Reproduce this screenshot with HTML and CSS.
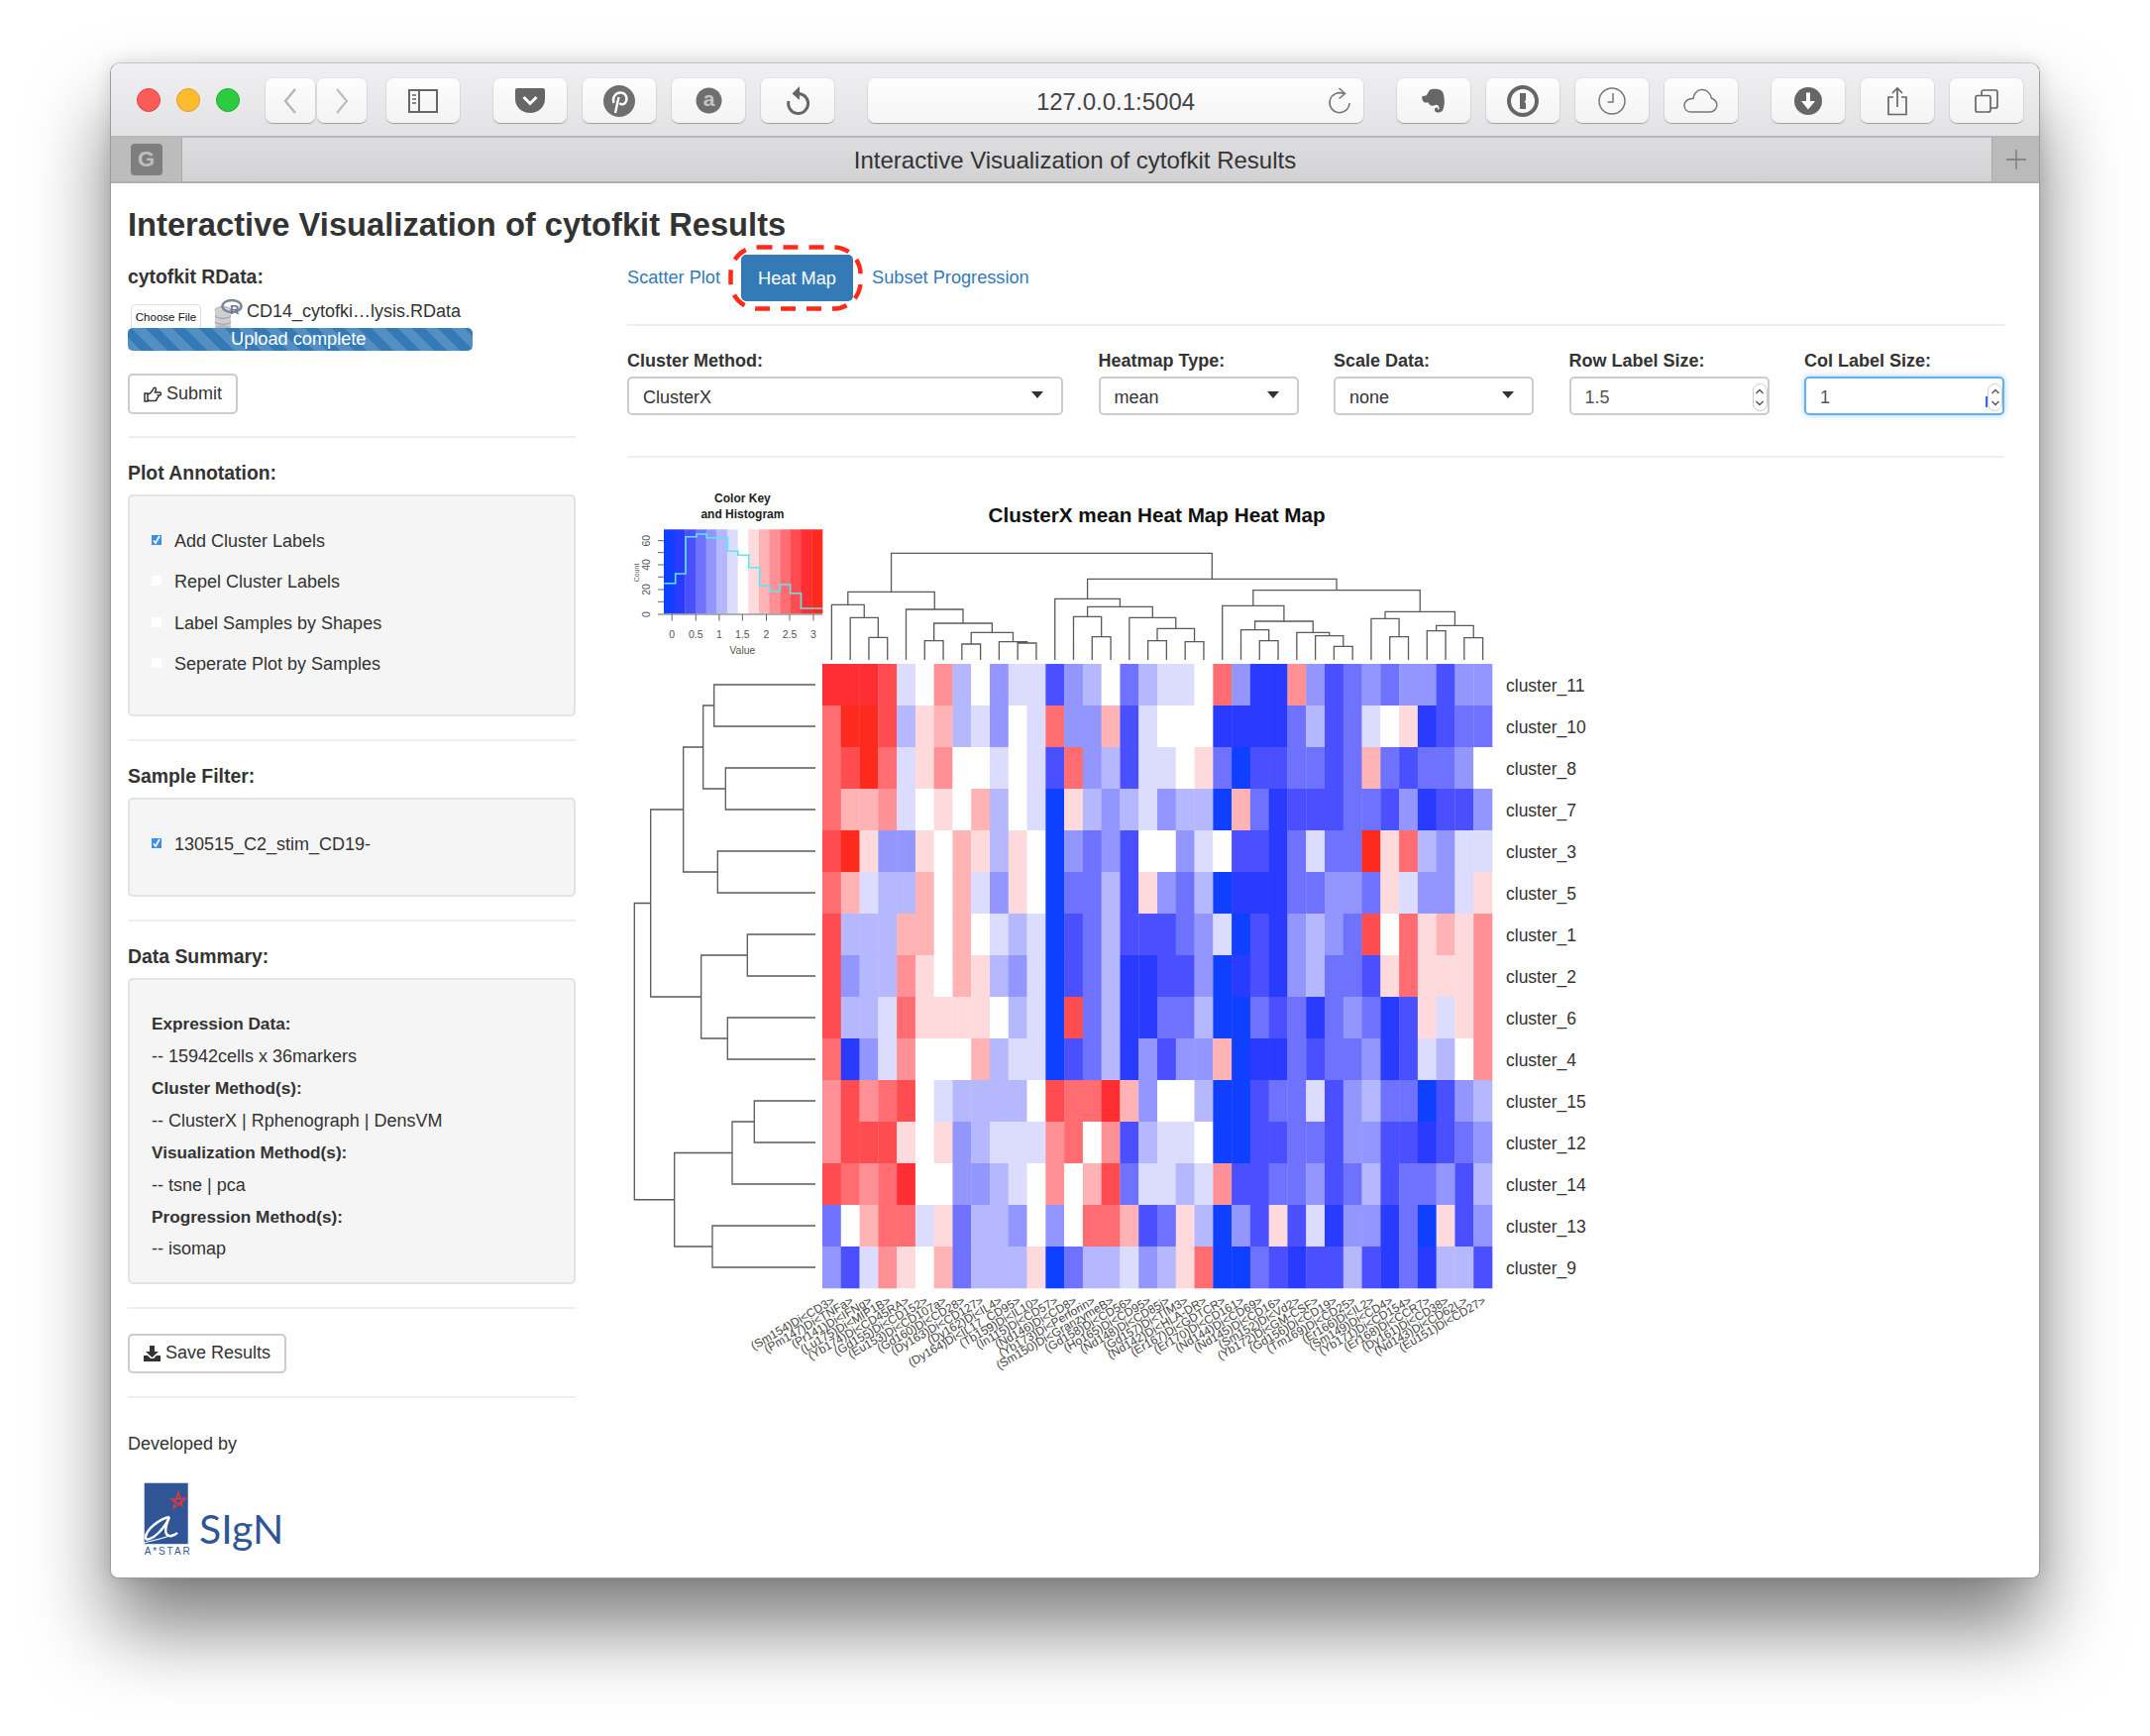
FILE: index.html
```html
<!DOCTYPE html>
<html lang="en">
<head>
    <meta charset="UTF-8">
    <meta name="viewport" content="width=device-width, initial-scale=1.0">
    <title>Interactive Visualization of cytofkit Results</title>
    <link rel="stylesheet" href="styles.css">
</head>
<body>
<div class="window">
    <div class="toolbar">
        <div class="lights">
            <span class="light light-red"></span>
            <span class="light light-yellow"></span>
            <span class="light light-green"></span>
        </div>
        <div class="tb-group tb-pair">
            <div class="tb-btn tb-nav"><svg width="14" height="26" viewBox="0 0 14 26"><path d="M12 1 2 13l10 12" fill="none" stroke="#b4b4b4" stroke-width="2.2"/></svg></div>
            <div class="tb-btn tb-nav"><svg width="14" height="26" viewBox="0 0 14 26"><path d="M2 1l10 12L2 25" fill="none" stroke="#bdbdbd" stroke-width="2.2"/></svg></div>
        </div>
        <div class="tb-btn tb-sidebar"><svg width="30" height="24" viewBox="0 0 30 24"><rect x="1" y="1" width="28" height="22" fill="none" stroke="#666" stroke-width="2"/><path d="M11 1v22" stroke="#666" stroke-width="2"/><path d="M4 6h4M4 10h4M4 14h4" stroke="#888" stroke-width="2"/></svg></div>
        <div class="tb-group">
            <div class="tb-btn"><svg width="30" height="25" viewBox="0 0 30 25"><path d="M2 0h26a2 2 0 0 1 2 2v9a15 14 0 0 1-30 0V2a2 2 0 0 1 2-2z" fill="#666"/><path d="M8.5 9l6.500 6.500L21.500 9" fill="none" stroke="#fff" stroke-width="3"/></svg></div>
            <div class="tb-btn"><svg width="32" height="32" viewBox="0 0 32 32"><circle cx="16" cy="16" r="16" fill="#6f6f6f"/><path d="M10.500 18C8.500 13 12 7.500 17 7.500c5 0 7.500 4 6 8.500-1.300 3.800-5 4.300-6.500 2M15.500 12 12 28" fill="none" stroke="#fff" stroke-width="2.400"/></svg></div>
            <div class="tb-btn"><svg width="27" height="27" viewBox="0 0 27 27"><circle cx="13.500" cy="13.500" r="13" fill="#6f6f6f"/><text x="13.500" y="19" class="icon-a">a</text></svg></div>
            <div class="tb-btn"><svg width="24" height="29" viewBox="0 0 24 29"><path d="M12.500 7.500A10 10 0 1 1 3 15" fill="none" stroke="#666" stroke-width="3"/><path d="M14 0 6.500 7.500 14 14z" fill="#666"/></svg></div>
        </div>
        <div class="address">
            <span class="address-text">127.0.0.1:5004</span>
            <svg class="address-reload" width="24" height="28" viewBox="0 0 24 28"><path d="M16 6.500A10 10 0 1 0 22 16" fill="none" stroke="#777" stroke-width="1.600"/><path d="M11.500 1l6 5.500-6 5" fill="none" stroke="#777" stroke-width="1.600"/></svg>
        </div>
        <div class="tb-group">
            <div class="tb-btn"><svg width="26" height="26" viewBox="0 0 24 25"><path d="M5 7l3-5c3-2 11-2 13 2 2 6 2 12 0 17-1 3-5 3-7 2-2-1-1-5 2-4v2c2 0 2-4-1-5-2 0-3 1-4 1-2 0-4-1-4-3H3C1 12 0 10 1 8z" fill="#666"/></svg></div>
            <div class="tb-btn"><svg width="32" height="32" viewBox="0 0 32 32"><circle cx="16" cy="16" r="14" fill="none" stroke="#666" stroke-width="4"/><path d="M13 8h6v7l-1.500 1.500L19 18v6h-6z" fill="#666"/></svg></div>
            <div class="tb-btn"><svg width="28" height="28" viewBox="0 0 28 28"><circle cx="14" cy="14" r="13" fill="none" stroke="#777" stroke-width="1.500"/><path d="M15 6v9H9.500" fill="none" stroke="#777" stroke-width="1.500"/></svg></div>
            <div class="tb-btn"><svg width="38" height="25" viewBox="0 0 38 25"><path d="M9 24h19a7 7 0 0 0 1.500-13.800C28 4 23.500.800 19 1.500 14.500 2 11.500 6 11 10.500 6.500 10 2 13 2 17.500 2 21.500 5 24 9 24z" fill="none" stroke="#777" stroke-width="1.500"/></svg></div>
        </div>
        <div class="tb-group">
            <div class="tb-btn"><svg width="28" height="28" viewBox="0 0 28 28"><circle cx="14" cy="14" r="14" fill="#666"/><path d="M12 5.500h4V14h5l-7 8.500L7 14h5z" fill="#fff"/></svg></div>
            <div class="tb-btn"><svg width="22" height="30" viewBox="0 0 22 30"><path d="M7 11H2v17.500h18V11h-5" fill="none" stroke="#666" stroke-width="1.700"/><path d="M11 21V2M6 7l5-5 5 5" fill="none" stroke="#666" stroke-width="1.700"/></svg></div>
            <div class="tb-btn"><svg width="24" height="24" viewBox="0 0 24 24"><rect x="1" y="6.500" width="15" height="16.500" rx="2" fill="none" stroke="#666" stroke-width="1.700"/><path d="M7 6.500V3a2 2 0 0 1 2-2h12a2 2 0 0 1 2 2v14a2 2 0 0 1-2 2h-5" fill="none" stroke="#666" stroke-width="1.700"/></svg></div>
        </div>
    </div>

    <div class="tabbar">
        <div class="tab-pin"><span class="favicon">G</span></div>
        <div class="tab-title">Interactive Visualization of cytofkit Results</div>
        <div class="tab-add"><svg width="20" height="20" viewBox="0 0 20 20"><path d="M10 0v20M0 10h20" stroke="#777" stroke-width="1.300"/></svg></div>
    </div>

    <div class="page">
        <h2 class="app-title">Interactive Visualization of cytofkit Results</h2>
        <div class="layout">
            <aside class="sidebar">
                <div class="section-label">cytofkit RData:</div>
                <div class="file-row">
                    <span class="file-btn">Choose File</span>
                    <svg class="file-icon" width="28" height="32" viewBox="0 0 28 32">
                        <ellipse cx="9" cy="11" rx="8" ry="3.500" fill="#d5d5d8" stroke="#aaa"/>
                        <rect x="1" y="11" width="16" height="18" fill="#cfcfd3"/>
                        <path d="M1 17c3 3 13 3 16 0M1 23c3 3 13 3 16 0" fill="none" stroke="#999"/>
                        <ellipse cx="9" cy="29" rx="8" ry="3" fill="#b9b9bd"/>
                        <ellipse cx="18" cy="7" rx="9.500" ry="6" fill="none" stroke="#7b8697" stroke-width="2.500"/>
                        <text x="16" y="15" class="icon-r">R</text>
                    </svg>
                    <span class="file-name">CD14_cytofki…lysis.RData</span>
                </div>
                <div class="progress">Upload complete</div>
                <div class="btn btn-submit">
                    <svg width="18" height="16" viewBox="0 0 18 16"><path d="M1 7h3v8H1zM4 8c2 0 5-3.500 6-6 .8-1.500 2.800-.5 2.300 1.500L11.500 6H16c2 0 2 3 0 3h-1.500c.8 1-.1 2.700-1 2.700 0 1.600-1 2.800-2.300 2.800H7.500C6 14.500 5 14 4 14" fill="none" stroke="#333" stroke-width="1.500"/></svg>
                    Submit
                </div>
                <hr class="rule">
                <div class="section-label">Plot Annotation:</div>
                <div class="well well-checks">
                    <div class="check-row"><span class="check on"><svg width="10" height="10" viewBox="0 0 10 10"><path d="M2 5.500 4 8l4-7" fill="none" stroke="#fff" stroke-width="1.800"/></svg></span>Add Cluster Labels</div>
                    <div class="check-row"><span class="check"></span>Repel Cluster Labels</div>
                    <div class="check-row"><span class="check"></span>Label Samples by Shapes</div>
                    <div class="check-row"><span class="check"></span>Seperate Plot by Samples</div>
                </div>
                <hr class="rule">
                <div class="section-label">Sample Filter:</div>
                <div class="well well-checks">
                    <div class="check-row"><span class="check on"><svg width="10" height="10" viewBox="0 0 10 10"><path d="M2 5.500 4 8l4-7" fill="none" stroke="#fff" stroke-width="1.800"/></svg></span>130515_C2_stim_CD19-</div>
                </div>
                <hr class="rule">
                <div class="section-label">Data Summary:</div>
                <div class="well well-summary">
                    <div class="summary-head">Expression Data:</div>
                    <div>-- 15942cells x 36markers</div>
                    <div class="summary-head">Cluster Method(s):</div>
                    <div>-- ClusterX | Rphenograph | DensVM</div>
                    <div class="summary-head">Visualization Method(s):</div>
                    <div>-- tsne | pca</div>
                    <div class="summary-head">Progression Method(s):</div>
                    <div>-- isomap</div>
                </div>
                <hr class="rule">
                <div class="btn btn-save">
                    <svg width="17" height="16" viewBox="0 0 17 16"><path d="M6 0h5v6h4l-6.500 6L2 6h4zM0 10h4l3 3h3l3-3h4v6H0z" fill="#333"/></svg>
                    Save Results
                </div>
                <hr class="rule">
                <div class="developed">Developed by</div>
                <svg class="logo" width="140" height="76" viewBox="0 0 140 76">
                    <rect x="0.700" y="0.700" width="44" height="61.500" fill="#2f5597"/>
                    <path d="M30 26l5-16 4 14-11-7 15-1z" fill="none" stroke="#e5383b" stroke-width="1.400"/>
                    <path d="M26 35C16 37 3 47 2 55c-1 5 7 2 13-4 5-5 9-11 11-16-4 9-6 18 0 19 4 1 7-2 8-3" fill="none" stroke="#fff" stroke-width="2.400"/>
                    <path d="M0 61c8-2 20-4 34-10" fill="none" stroke="#fff" stroke-width="1.200"/>
                    <text x="0.700" y="73" class="logo-star">A*STAR</text>
                    <text x="56" y="62" class="logo-sign">SIgN</text>
                </svg>
            </aside>

            <main class="main">
                <nav class="tabs">
                    <a class="tab">Scatter Plot</a>
                    <a class="tab tab-active">Heat Map
                        <svg class="tab-ring" width="136" height="67" viewBox="0 0 136 67"><rect x="2.500" y="2.500" width="131" height="62" rx="27" fill="none" stroke="#ff2a1a" stroke-width="4.500" stroke-dasharray="15 11"/></svg>
                    </a>
                    <a class="tab">Subset Progression</a>
                </nav>
                <hr class="rule rule-tabs">
                <div class="controls">
                    <div class="control">
                        <label class="control-label">Cluster Method:</label>
                        <div class="field field-select">ClusterX</div>
                    </div>
                    <div class="control">
                        <label class="control-label">Heatmap Type:</label>
                        <div class="field field-select">mean</div>
                    </div>
                    <div class="control">
                        <label class="control-label">Scale Data:</label>
                        <div class="field field-select">none</div>
                    </div>
                    <div class="control">
                        <label class="control-label">Row Label Size:</label>
                        <div class="field field-number">1.5
                            <span class="spinner"><svg width="10" height="22" viewBox="0 0 10 22"><path d="M1.500 7 5 3.500 8.500 7M1.500 15 5 18.500 8.500 15" fill="none" stroke="#555" stroke-width="1.400"/></svg></span>
                        </div>
                    </div>
                    <div class="control">
                        <label class="control-label">Col Label Size:</label>
                        <div class="field field-number field-focus">1
                            <span class="spin-bar"></span>
                            <span class="spinner"><svg width="10" height="22" viewBox="0 0 10 22"><path d="M1.500 7 5 3.500 8.500 7M1.500 15 5 18.500 8.500 15" fill="none" stroke="#555" stroke-width="1.400"/></svg></span>
                        </div>
                    </div>
                </div>
                <hr class="rule rule-controls">

                <svg class="plot" width="900" height="940" viewBox="633 480 900 940">
                    <text x="749.400" y="507" class="key-title">Color Key</text>
                    <text x="749.400" y="523" class="key-title">and Histogram</text>
                    <text x="1167.600" y="527" class="plot-title">ClusterX mean Heat Map Heat Map</text>

                    <g id="key-bands"></g>
                    <polyline class="hist" points="670.2,588.7 681.7,588.7 681.7,579 692,579 692,541.7 702.9,541.7 702.9,539 713.2,539 713.2,542.7 734.5,542.7 734.5,556.3 744.8,556.3 744.8,560.3 755.7,560.3 755.7,572.7 766.6,572.7 766.6,591.3 777,591.3 777,596.7 787.3,596.7 787.3,590 797.6,590 797.6,598.7 808.5,598.7 808.5,614 829.8,614"/>
                    <path class="axis" d="M664 545.700h6M664 557.700h6M664 570h6M664 582.300h6M664 595h6M664 607.300h6M664 620h6M670 620h160M678.200 620v6.500M702.300 620v6.500M725.900 620v6.500M749.400 620v6.500M773.500 620v6.500M797 620v6.500M821 620v6.500"/>
                    <text class="axis-num" transform="rotate(-90 656 545.700)" x="656" y="545.700">60</text>
                    <text class="axis-num" transform="rotate(-90 656 570)" x="656" y="570">40</text>
                    <text class="axis-num" transform="rotate(-90 656 595)" x="656" y="595">20</text>
                    <text class="axis-num" transform="rotate(-90 656 620)" x="656" y="620">0</text>
                    <text class="axis-small" transform="rotate(-90 645 578)" x="645" y="578">Count</text>
                    <text class="axis-num" x="678.200" y="643.500">0</text>
                    <text class="axis-num" x="702.300" y="643.500">0.5</text>
                    <text class="axis-num" x="725.900" y="643.500">1</text>
                    <text class="axis-num" x="749.400" y="643.500">1.5</text>
                    <text class="axis-num" x="773.500" y="643.500">2</text>
                    <text class="axis-num" x="797" y="643.500">2.5</text>
                    <text class="axis-num" x="821" y="643.500">3</text>
                    <text class="axis-num" x="749.400" y="659.500">Value</text>

                    <path id="tree-top" class="tree"/>
                    <path id="tree-left" class="tree"/>
                    <g id="heat-cells"></g>
                    <g id="row-labels"></g>
                    <g id="col-labels"></g>
                </svg>
            </main>
        </div>
    </div>
</div>
<script src="plot.js"></script>
</body>
</html>
```

FILE: styles.css
```css
* { box-sizing: border-box; }

body {
    margin: 0;
    height: 1752px;
    background: #fff;
    font-family: "Liberation Sans", Arial, sans-serif;
    color: #333;
    overflow: hidden;
}

.window {
    width: 1948px;
    height: 1530px;
    margin: 63px 0 0 111px;
    border: 1px solid #9c9c9c;
    border-top-color: #c4c4c4;
    border-radius: 10px 10px 8px 8px;
    box-shadow: 0 50px 80px rgba(0, 0, 0, 0.5), 0 0 18px rgba(0, 0, 0, 0.12);
    background: #fff;
    overflow: hidden;
}

/* safari chrome */
.toolbar {
    display: flex;
    align-items: flex-start;
    gap: 34px;
    height: 75px;
    padding: 15px 0 0 26px;
    background: linear-gradient(#f0eff1, #e2e1e3);
    border-bottom: 2px solid #b8b7b9;
}
.lights { display: flex; gap: 16px; margin-top: 10px; margin-right: -8px; }
.light { width: 24px; height: 24px; border-radius: 50%; }
.light-red { background: #fc5b57; border: 1px solid #e0443e; }
.light-yellow { background: #fdbb2e; border: 1px solid #dea123; }
.light-green { background: #2ccb41; border: 1px solid #1fad2d; }
.tb-group { display: flex; gap: 16px; }
.tb-pair { gap: 2px; }
.tb-btn {
    display: flex;
    align-items: center;
    justify-content: center;
    width: 74px;
    height: 45px;
    background: linear-gradient(#fdfdfd, #f3f3f3);
    border-radius: 7px;
    box-shadow: 0 1px 1px rgba(0, 0, 0, 0.28), 0 0 0 1px rgba(0, 0, 0, 0.04);
}
.tb-nav { width: 50px; }
.tb-sidebar { margin-left: -14px; }
.address {
    position: relative;
    display: flex;
    align-items: center;
    justify-content: center;
    width: 500px;
    height: 45px;
    background: linear-gradient(#fdfdfd, #f5f5f5);
    border-radius: 7px;
    box-shadow: 0 1px 1px rgba(0, 0, 0, 0.28), 0 0 0 1px rgba(0, 0, 0, 0.04);
}
.address-text { font-size: 24px; color: #444; padding-top: 2px; }
.address-reload { position: absolute; right: 12px; top: 9px; }
.icon-a { font-size: 21px; font-weight: bold; fill: #c4c4c4; text-anchor: middle; }

.tabbar {
    display: flex;
    align-items: stretch;
    height: 46px;
    background: linear-gradient(#dddcde, #d2d1d3);
    border-bottom: 2px solid #aeaeae;
}
.tab-pin {
    display: flex;
    align-items: center;
    justify-content: center;
    width: 72px;
    background: #bdbcbd;
    border-right: 1px solid #aaa;
}
.favicon {
    width: 32px;
    height: 32px;
    line-height: 32px;
    text-align: center;
    background: #7e7e7f;
    border-radius: 4px;
    color: #bfbfbf;
    font-size: 22px;
    font-weight: bold;
}
.tab-title {
    flex: 1;
    padding-right: 24px;
    text-align: center;
    line-height: 46px;
    font-size: 24px;
    color: #333;
}
.tab-add {
    display: flex;
    align-items: center;
    justify-content: center;
    width: 48px;
    background: #bbbabb;
    border-left: 1px solid #aaa;
}

/* shiny page */
.page { padding: 22px 0 0 17px; }
.app-title {
    margin: 0;
    font-size: 32.700px;
    line-height: 40px;
    font-weight: bold;
    color: #333;
}
.layout {
    display: grid;
    grid-template-columns: 452px 1390px;
    column-gap: 52px;
}
.sidebar { padding-top: 20px; font-size: 18px; }
.section-label {
    font-size: 19.400px;
    line-height: 24px;
    font-weight: bold;
}
.file-row {
    display: flex;
    align-items: flex-start;
    height: 24px;
    margin-top: 16px;
    margin-left: 3px;
}
.file-btn {
    width: 71px;
    height: 25px;
    line-height: 25px;
    text-align: center;
    font-size: 11.500px;
    color: #111;
    border: 1px solid #ddd;
    border-bottom: none;
    border-radius: 5px 5px 0 0;
    background: #fff;
}
.file-icon { margin: -5px 0 0 13px; overflow: visible; flex: none; }
.file-name { margin: -4px 0 0 5px; line-height: 22px; font-size: 18px; color: #333; }
.icon-r { font-size: 13px; font-weight: bold; fill: #6a7a95; }
.progress {
    height: 23px;
    padding-left: 104px;
    line-height: 23px;
    width: 348px;
    border-radius: 5px;
    color: #fff;
    font-size: 18.200px;
    position: relative;
    background: #337ab7 repeating-linear-gradient(45deg, rgba(255, 255, 255, 0.16) 0, rgba(255, 255, 255, 0.16) 9.500px, transparent 9.500px, transparent 19px);
}
.btn {
    display: inline-flex;
    align-items: center;
    gap: 5px;
    height: 41px;
    padding: 0 14px;
    border: 2px solid #ccc;
    border-radius: 5px;
    background: #fff;
    font-size: 18px;
    vertical-align: top;
}
.btn-submit { margin: 23px 0 -1px; }
.btn-save { margin-top: 2px; height: 40px; }
.rule {
    margin: 23px 0;
    height: 2px;
    border: 0;
    background: #eee;
}
.well {
    margin-top: 10px;
    background: #f5f5f5;
    border: 2px solid #e3e3e3;
    border-radius: 5px;
}
.well-checks { padding: 25px 22px 30px; }
.check-row {
    display: flex;
    align-items: center;
    height: 41.300px;
    font-size: 18px;
}
.check {
    flex: none;
    width: 10px;
    height: 10px;
    margin-right: 13px;
    margin-top: -3px;
    background: #fff;
    line-height: 0;
}
.check.on { background: #3d8fe8; }
.well-summary {
    padding: 28px 22px 17px;
    font-size: 18px;
    line-height: 32.400px;
}
.summary-head { font-weight: bold; font-size: 17.200px; }
.developed { line-height: 24px; margin-top: 34px; font-size: 18px; }
.logo { display: block; margin: 27px 0 0 16px; overflow: visible; }
.logo-star { font-size: 10px; letter-spacing: 1.900px; fill: #2f5597; }
.logo-sign { font-family: Lato, sans-serif; font-size: 41px; fill: #2f5597; }

.main { padding-top: 10px; }
.tabs { display: flex; align-items: center; height: 47px; font-size: 18.200px; }
.tab {
    color: #337ab7;
    line-height: 49px;
}
.tab-active {
    position: relative;
    width: 113px;
    height: 47px;
    margin: 0 19px 0 21px;
    text-align: center;
    background: #337ab7;
    border-radius: 5px;
    color: #fff;
}
.tab-ring { position: absolute; left: -13px; top: -10px; overflow: visible; }
.rule-tabs { margin: 23px 0 0; }
.controls {
    display: grid;
    grid-template-columns: 440px repeat(4, 202px);
    column-gap: 35.500px;
    margin-top: 23px;
}
.control-label {
    display: block;
    height: 28px;
    line-height: 24px;
    font-size: 18px;
    font-weight: bold;
}
.field {
    position: relative;
    height: 39px;
    line-height: 38px;
    padding-left: 14px;
    border: 2px solid #ccc;
    border-radius: 5px;
    font-size: 18px;
    color: #333;
    background: #fff;
}
.field-select::after {
    content: "";
    position: absolute;
    right: 18px;
    top: 13px;
    border-left: 6px solid transparent;
    border-right: 6px solid transparent;
    border-top: 7px solid #333;
}
.field-number { color: #555; }
.field-focus {
    border-color: #66afe9;
    box-shadow: 0 0 6px rgba(102, 175, 233, 0.6);
}
.spinner {
    position: absolute;
    right: 0;
    top: 5px;
    display: flex;
    align-items: center;
    justify-content: center;
    width: 15px;
    height: 28px;
    border: 1px solid #ccc;
    border-radius: 8px;
    background: #fff;
}
.spin-bar {
    position: absolute;
    right: 15px;
    top: 18px;
    width: 2px;
    height: 11px;
    background: #2a6fdc;
}
.rule-controls { margin: 41px 0 18px; }
.plot { display: block; overflow: visible; }

/* gplots figure */
.key-title { font-size: 12px; font-weight: bold; fill: #222; text-anchor: middle; }
.plot-title { font-size: 20.700px; font-weight: bold; fill: #111; text-anchor: middle; }
.hist { fill: none; stroke: #5ce6ee; stroke-width: 1.600; }
.axis { fill: none; stroke: #666; stroke-width: 1; }
.axis-num { font-size: 10.500px; fill: #555; text-anchor: middle; }
.axis-small { font-size: 7px; fill: #666; text-anchor: middle; }
.tree { fill: none; stroke: #5a5a5a; stroke-width: 1.300; }
.row-label { font-size: 17.500px; fill: #333; }
.col-label { font-size: 12px; fill: #444; text-anchor: end; }

.lv-a { fill: #0f3fff; }
.lv-b { fill: #283bff; }
.lv-c { fill: #4a50ff; }
.lv-d { fill: #6f72ff; }
.lv-e { fill: #9396ff; }
.lv-f { fill: #b5b7ff; }
.lv-g { fill: #dcdcff; }
.lv-w { fill: #ffffff; }
.lv-h { fill: #ffdadd; }
.lv-i { fill: #ffb3b5; }
.lv-j { fill: #ff9095; }
.lv-k { fill: #ff6d72; }
.lv-l { fill: #ff4c50; }
.lv-m { fill: #ff2e33; }
.lv-n { fill: #ff2a1e; }
```

FILE: plot.js
```js
// heatmap figure: rows top to bottom, one letter per marker (a = deep blue .. w = white .. n = deep red)
var SVG_NS = 'http://www.w3.org/2000/svg';

var HEAT = [
    'mmmlgwjfweggcefwdfggwkebbjecdedeecee',
    'knnlfhifgewgkeeicgwwwbbbbdfcdgwhbcdd',
    'klnkghjwwgwgckefcggwhdaccddcdidcddew',
    'kiijgwhwifwgahfefgeffaidbcccddcebcce',
    'lnheehwihfhwaedecwwegwccbdgddnhkfegg',
    'kigffiwigehwaddfchedfabbbddeedhgeegh',
    'lfffiiwiwgfgacdfcccdegacbefedlwkhihj',
    'leffjhwihfegacdfbbcceabcbefddchkhhhj',
    'lffgkhhhhwfgaldfbbddfaadcdbdedbchghj',
    'kbegjwwwifggacdfbeceeiabbdcddebcgfwj',
    'jljklwgffffwlkkmiewwfaacddgcefddacef',
    'jlllhwhefgggjkwjcfggwaaccddceeccbcde',
    'lkjkmwweefgwjwildggfgjccddecdfcddecf',
    'dwikkghdffewewkkicdhfaechcgbeebdahce',
    'ecgjhwidfffhadffgefhkaadcbccfcbdbffc'
];

var ROWS = ['cluster_11', 'cluster_10', 'cluster_8', 'cluster_7', 'cluster_3', 'cluster_5', 'cluster_1', 'cluster_2',
    'cluster_6', 'cluster_4', 'cluster_15', 'cluster_12', 'cluster_14', 'cluster_13', 'cluster_9'];

var COLS = ['(Sm154)Di<CD3>', '(Pm147)Di<TNFa>', '(Pr141)Di<IFNg>', '(Lu175)Di<MIP1B>', '(Yb174)Di<CD45RA>',
    '(Gd155)Di<CD152>', '(Eu153)Di<CD107a>', '(Gd160)Di<CD28>', '(Dy163)Di<CD127>', '(Dy162)Di<IL4>',
    '(Dy164)Di<IL17_CD95>', '(Tb159)Di<IL10>', '(In115)Di<CD57>', '(Nd146)Di<CD8>', '(Yb173)Di<Perforin>',
    '(Sm150)Di<GranzymeB>', '(Gd158)Di<CD56>', '(Ho165)Di<CD95>', '(Nd148)Di<CD85j>', '(Gd157)Di<TIM3>',
    '(Nd142)Di<HLA-DR>', '(Er167)Di<GDTCR>', '(Er170)Di<CD161>', '(Nd144)Di<CD69>', '(Nd145)Di<CD16>',
    '(Sm152)Di<Vd2>', '(Yb172)Di<GM-CSF>', '(Gd156)Di<CD19>', '(Tm169)Di<CD25>', '(Er166)Di<IL2>',
    '(Sm149)Di<CD4>', '(Yb171)Di<CD154>', '(Er168)Di<CCR7>', '(Dy161)Di<CD38>', '(Nd143)Di<CD62L>', '(Eu151)Di<CD27>'];

var TREE_TOP = [558.3,
    [597.3,
        [610.3, 0, [623.3, 1, [643.3, 2, 3]]],
        [615, 4, [629, [646.7, 5, 6], [638.3, [650, 7, 8], [647.7, 9, [649, 10, 11]]]]]],
    [584.3,
        [604.3, 12, [612.3, [622.3, 13, [642.7, 14, 15]], [623.3, 16, [634.3, [646.7, 17, 18], [647.7, 19, 20]]]]],
        [595.7,
            [611.3, 21, [627, [635.7, 22, [646.7, 23, 24]], [638.3, 25, [641.7, 26, [652.3, 27, 28]]]]],
            [617.3, [624.3, 29, [642.7, 30, 31]], [631.3, [636.7, 32, 33], [643.7, 34, 35]]]]]];

var TREE_LEFT = [640.3,
    [656.7,
        [689.7, [709.7, [720.7, 0, 1], [732.3, 2, 3]], [724.3, 4, 5]],
        [707.7, [754.3, 6, 7], [734.3, 8, 9]]],
    [680.7,
        [739, [761.3, 10, 11], 12],
        [719, 13, 14]]];

var HEAT_X = 830, HEAT_Y = 670, CELL_W = 676 / 36, CELL_H = 42;

function el(name, attrs, text) {
    var node = document.createElementNS(SVG_NS, name);
    for (var k in attrs) node.setAttribute(k, attrs[k]);
    if (text) node.textContent = text;
    return node;
}

// walks the tree, returns where the node sits along the leaf axis
function walk(node, leafPos, base, out, vertical) {
    if (typeof node === 'number') return { pos: leafPos(node), level: base };
    var a = walk(node[1], leafPos, base, out, vertical);
    var b = walk(node[2], leafPos, base, out, vertical);
    var h = node[0];
    if (vertical) {
        out.push('M' + a.pos + ' ' + a.level + 'V' + h + 'H' + b.pos + 'V' + b.level);
    } else {
        out.push('M' + a.level + ' ' + a.pos + 'H' + h + 'V' + b.pos + 'H' + b.level);
    }
    return { pos: (a.pos + b.pos) / 2, level: h };
}

var topPath = [];
walk(TREE_TOP, function (i) { return HEAT_X + CELL_W * (i + 0.5); }, 666, topPath, true);
document.getElementById('tree-top').setAttribute('d', topPath.join(''));

var leftPath = [];
walk(TREE_LEFT, function (i) { return HEAT_Y + CELL_H * (i + 0.5); }, 823, leftPath, false);
document.getElementById('tree-left').setAttribute('d', leftPath.join(''));

var cells = document.getElementById('heat-cells');
HEAT.forEach(function (row, r) {
    row.split('').forEach(function (level, c) {
        cells.appendChild(el('rect', {
            x: HEAT_X + c * CELL_W,
            y: HEAT_Y + r * CELL_H,
            width: CELL_W + 0.3,
            height: CELL_H + 0.3,
            'class': 'lv-' + level
        }));
    });
});

var rowLabels = document.getElementById('row-labels');
ROWS.forEach(function (name, r) {
    rowLabels.appendChild(el('text', { x: 1520, y: HEAT_Y + CELL_H * (r + 0.5) + 7, 'class': 'row-label' }, name));
});

var colLabels = document.getElementById('col-labels');
COLS.forEach(function (name, c) {
    var x = HEAT_X + CELL_W * (c + 0.5) + 4, y = 1315;
    colLabels.appendChild(el('text', {
        x: x, y: y, 'class': 'col-label', transform: 'rotate(-30 ' + x + ' ' + y + ')'
    }, name));
});

var bands = document.getElementById('key-bands');
'abcdefgwhijklmn'.split('').forEach(function (level, i) {
    bands.appendChild(el('rect', { x: 670 + i * 10.667, y: 534.3, width: 11, height: 85, 'class': 'lv-' + level }));
});
```
